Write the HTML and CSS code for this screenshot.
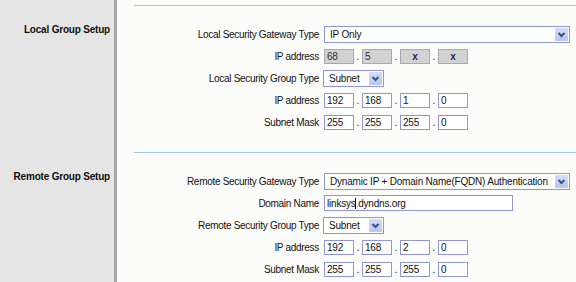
FILE: index.html
```html
<!DOCTYPE html>
<html lang="en">
<head>
  <meta charset="UTF-8" />
  <title>IPSec VPN | Group Setup</title>
  <link rel="stylesheet" href="styles.css">
</head>
<body>

<div class="section">
  <div class="side"><h3>Local Group Setup</h3></div>
  <div class="main">
    <div class="rule"></div>
    <div class="form">
      <label>Local Security Gateway Type</label>
      <div class="select wide">
        <span>IP Only</span>
        <span class="arrow"><svg width="13" height="13" viewBox="0 0 13 13"><path d="M3.5 5 L6.5 8 L9.5 5" /></svg></span>
      </div>

      <label>IP address</label>
      <div class="ip">
        <input class="octet off" value="68" readonly><span class="dot">.</span>
        <input class="octet off" value="5" readonly><span class="dot">.</span>
        <input class="octet off mask" value="x" readonly><span class="dot">.</span>
        <input class="octet off mask" value="x" readonly>
      </div>

      <label>Local Security Group Type</label>
      <div class="select small">
        <span>Subnet</span>
        <span class="arrow"><svg width="13" height="13" viewBox="0 0 13 13"><path d="M3.5 5 L6.5 8 L9.5 5" /></svg></span>
      </div>

      <label>IP address</label>
      <div class="ip">
        <input class="octet" value="192"><span class="dot">.</span>
        <input class="octet" value="168"><span class="dot">.</span>
        <input class="octet" value="1"><span class="dot">.</span>
        <input class="octet" value="0">
      </div>

      <label>Subnet Mask</label>
      <div class="ip">
        <input class="octet" value="255"><span class="dot">.</span>
        <input class="octet" value="255"><span class="dot">.</span>
        <input class="octet" value="255"><span class="dot">.</span>
        <input class="octet" value="0">
      </div>
    </div>
  </div>
</div>

<div class="section">
  <div class="side"><h3>Remote Group Setup</h3></div>
  <div class="main">
    <div class="rule"></div>
    <div class="form">
      <label>Remote Security Gateway Type</label>
      <div class="select wide">
        <span>Dynamic IP + Domain Name(FQDN) Authentication</span>
        <span class="arrow"><svg width="13" height="13" viewBox="0 0 13 13"><path d="M3.5 5 L6.5 8 L9.5 5" /></svg></span>
      </div>

      <label>Domain Name</label>
      <div class="domain">
        <input class="text" value="linksys.dyndns.org">
        <span class="caret"></span>
      </div>

      <label>Remote Security Group Type</label>
      <div class="select small">
        <span>Subnet</span>
        <span class="arrow"><svg width="13" height="13" viewBox="0 0 13 13"><path d="M3.5 5 L6.5 8 L9.5 5" /></svg></span>
      </div>

      <label>IP address</label>
      <div class="ip">
        <input class="octet" value="192"><span class="dot">.</span>
        <input class="octet" value="168"><span class="dot">.</span>
        <input class="octet" value="2"><span class="dot">.</span>
        <input class="octet" value="0">
      </div>

      <label>Subnet Mask</label>
      <div class="ip">
        <input class="octet" value="255"><span class="dot">.</span>
        <input class="octet" value="255"><span class="dot">.</span>
        <input class="octet" value="255"><span class="dot">.</span>
        <input class="octet" value="0">
      </div>
    </div>
  </div>
</div>

</body>
</html>
```

FILE: styles.css
```css
* {
  margin: 0;
  padding: 0;
  box-sizing: border-box;
}

body {
  font-family: 'Liberation Sans', Arial, sans-serif;
  font-size: 10px;
  color: #111;
  background: #fcfcfa;
  overflow: hidden;
}

.section {
  display: flex;
}

.side {
  width: 117px;
  flex-shrink: 0;
  background: #e5e5e5;
  border-right: 3px solid transparent;
  border-image: linear-gradient(to right, #d6d6d6, #a6a6a6) 1;
  text-align: right;
  padding: 24px 4px 0 0;
}

.side h3 {
  font-size: 10px;
  font-weight: bold;
  letter-spacing: -0.2px;
  line-height: 12px;
  color: #111;
}

.main {
  flex: 1;
  padding: 5px 0 14px;
}

.rule {
  height: 1px;
  background: #9cc6ec;
  margin: 0 0 17px 17px;
}

.form {
  display: grid;
  grid-template-columns: 202px auto;
  grid-auto-rows: 22px;
  column-gap: 5px;
  align-items: center;
}

.form label {
  text-align: right;
  letter-spacing: -0.3px;
  white-space: nowrap;
}

.select {
  display: flex;
  align-items: center;
  justify-content: space-between;
  height: 17px;
  border: 1px solid #8f97d2;
  background: #fff;
  padding: 0 1px 0 5px;
  letter-spacing: -0.2px;
}

.select.wide {
  width: 246px;
}

.select.small {
  width: 61px;
  margin-left: -1px;
}

.arrow {
  display: flex;
  width: 13px;
  height: 13px;
  background: linear-gradient(#d4ddfa, #b6c5f3);
  border-radius: 1px;
}

.arrow path {
  fill: none;
  stroke: #3d4f82;
  stroke-width: 2;
}

.ip {
  display: flex;
  align-items: baseline;
}

.octet,
.text {
  height: 15px;
  border: 1px solid #8f97d2;
  background: #fff;
  font-family: 'Liberation Sans', Arial, sans-serif;
  font-size: 10px;
  color: #111;
  padding: 0 2px;
  letter-spacing: -0.2px;
  outline: none;
}

.octet {
  width: 30px;
}

.octet.off {
  background: #d2d2d2;
  border-color: #a9a9a9;
  color: #333;
}

.octet.mask {
  text-align: center;
  font-weight: bold;
  color: #1b2b5e;
}

.dot {
  width: 8px;
  text-align: center;
}

.domain {
  position: relative;
  width: 189px;
}

.text {
  width: 189px;
  height: 16px;
}

.caret {
  position: absolute;
  left: 31px;
  top: 3px;
  width: 2px;
  height: 11px;
  background: #000;
  border-right: 1px solid #fff;
}
```
